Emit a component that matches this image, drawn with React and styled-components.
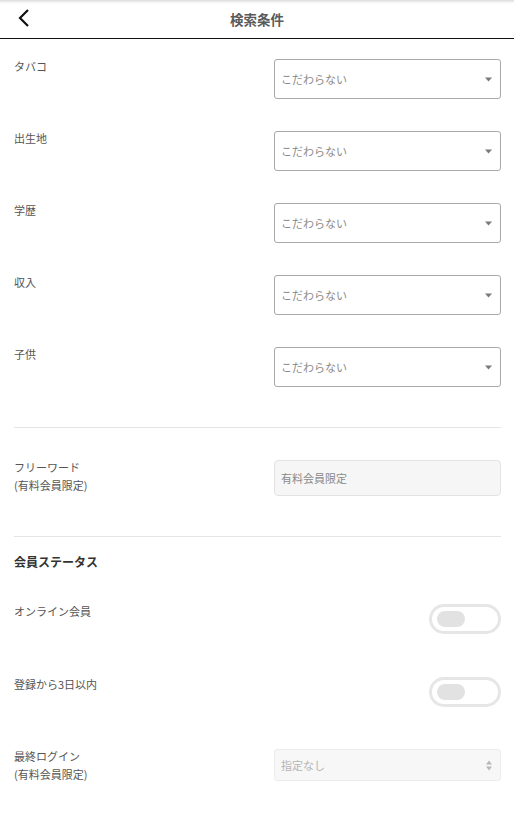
import React from 'react';
import styled, { createGlobalStyle } from 'styled-components';

const GlobalStyle = createGlobalStyle`
  html, body {
    margin: 0;
    padding: 0;
    background: #fff;
  }
  body {
    font-family: "Noto Sans CJK JP", "Noto Sans", sans-serif;
    color: #555;
  }
`;

const Page = styled.div`
  width: 514px;
  background: #fff;
`;

const Header = styled.header`
  position: relative;
  height: 38px;
  display: flex;
  align-items: center;
  justify-content: center;
  border-bottom: 1.5px solid #111;
  background: linear-gradient(to bottom, #dcdcdc 0, #f3f3f3 2px, #fff 4px);
`;

const BackButton = styled.button`
  position: absolute;
  left: 12px;
  top: 6px;
  width: 24px;
  height: 24px;
  padding: 0;
  border: 0;
  background: none;
  display: flex;
  align-items: center;
  justify-content: center;
`;

const Title = styled.h1`
  margin: 0;
  font-size: 13.5px;
  font-weight: 700;
  color: #5a5a5a;
`;

const Body = styled.main`
  padding: 20px 13px 30px 14px;
`;

const Row = styled.div`
  display: flex;
  justify-content: space-between;
  align-items: flex-start;
  margin-bottom: ${p => p.$gap ?? 32}px;
`;

const Label = styled.div`
  font-size: 11px;
  line-height: 18px;
  color: #555;
  margin-top: -2px;
`;

const SelectBox = styled.div`
  width: 227px;
  height: ${p => (p.$disabled ? 32 : 40)}px;
  box-sizing: border-box;
  border: 1px solid ${p => (p.$disabled ? '#ececec' : '#a9a9a9')};
  border-radius: 3px;
  background: ${p => (p.$disabled ? '#f7f7f7' : '#fff')};
  display: flex;
  align-items: center;
  justify-content: space-between;
  padding: 0 8px 0 6px;
  font-size: 11px;
  color: ${p => (p.$disabled ? '#b5b5b5' : '#8a8a8a')};
`;

const TextBox = styled.div`
  width: 227px;
  height: 36px;
  box-sizing: border-box;
  border: 1px solid #e3e3e3;
  border-radius: 4px;
  background: #f6f6f6;
  display: flex;
  align-items: center;
  padding: 0 6px;
  font-size: 11px;
  color: #8a8a8a;
`;

const Divider = styled.hr`
  border: 0;
  border-top: 1px solid #e4e4e4;
  margin: ${p => p.$top}px 0 ${p => p.$bottom}px;
`;

const SectionTitle = styled.h2`
  margin: 0 0 33px;
  font-size: 12px;
  line-height: 18px;
  font-weight: 700;
  color: #333;
`;

const Toggle = styled.div`
  width: 72px;
  height: 30px;
  box-sizing: border-box;
  border: 3px solid #e6e6e6;
  border-radius: 15px;
  background: #fff;
  display: flex;
  align-items: center;
  padding-left: 5px;
`;

const Knob = styled.span`
  width: 28px;
  height: 16px;
  border-radius: 8px;
  background: #e2e2e2;
`;

const Caret = () => (
  <svg width="7" height="5" viewBox="0 0 7 5">
    <path d="M0 0.5 L7 0.5 L3.5 4.5 Z" fill="#7a7a7a" />
  </svg>
);

const UpDown = () => (
  <svg width="6" height="11" viewBox="0 0 6 11">
    <path d="M0 4.5 L6 4.5 L3 0.5 Z" fill="#b8b8b8" />
    <path d="M0 6.5 L6 6.5 L3 10.5 Z" fill="#b8b8b8" />
  </svg>
);

const selects = ['タバコ', '出生地', '学歴', '収入', '子供'];

const App = () => (
  <Page>
    <GlobalStyle />
    <Header>
      <BackButton aria-label="戻る">
        <svg width="14" height="20" viewBox="0 0 14 20">
          <path d="M11 2 L3 10 L11 18" fill="none" stroke="#111" strokeWidth="2.2" />
        </svg>
      </BackButton>
      <Title>検索条件</Title>
    </Header>
    <Body>
      {selects.map((name, i) => (
        <Row key={name} $gap={i === selects.length - 1 ? 0 : 32}>
          <Label>{name}</Label>
          <SelectBox>
            こだわらない
            <Caret />
          </SelectBox>
        </Row>
      ))}
      <Divider $top={40} $bottom={32} />
      <Row $gap={0}>
        <Label>フリーワード<br />(有料会員限定)</Label>
        <TextBox>有料会員限定</TextBox>
      </Row>
      <Divider $top={40} $bottom={16} />
      <SectionTitle>会員ステータス</SectionTitle>
      <Row $gap={43}>
        <Label>オンライン会員</Label>
        <Toggle><Knob /></Toggle>
      </Row>
      <Row $gap={42}>
        <Label>登録から3日以内</Label>
        <Toggle><Knob /></Toggle>
      </Row>
      <Row $gap={0}>
        <Label>最終ログイン<br />(有料会員限定)</Label>
        <SelectBox $disabled>
          指定なし
          <UpDown />
        </SelectBox>
      </Row>
    </Body>
  </Page>
);

export default App;
